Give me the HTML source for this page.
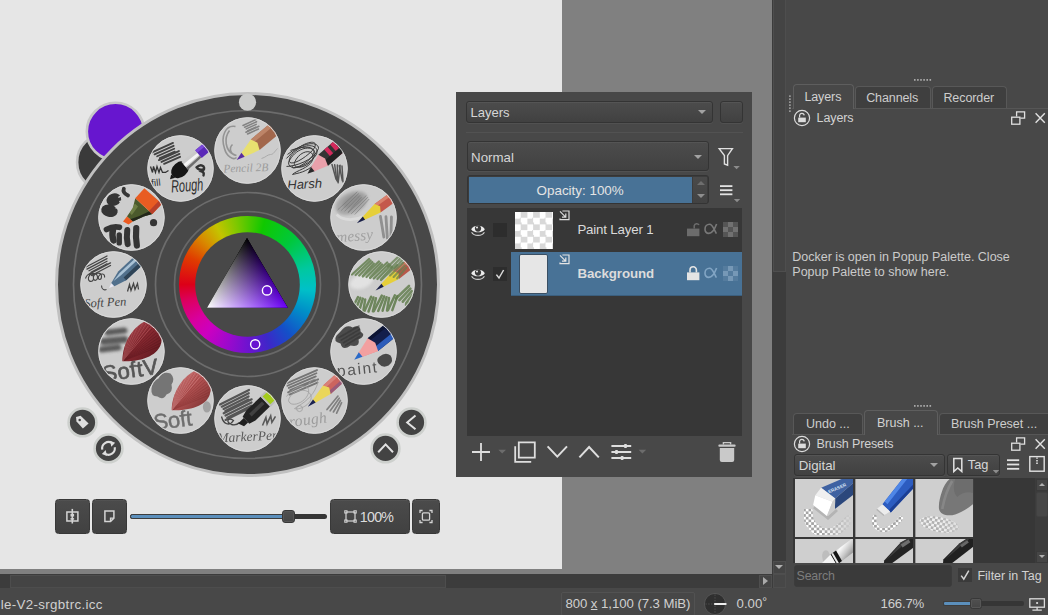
<!DOCTYPE html>
<html>
<head>
<meta charset="utf-8">
<title>Krita</title>
<style>
*{box-sizing:border-box;margin:0;padding:0}
html,body{width:1048px;height:615px;overflow:hidden;background:#484848;font-family:"Liberation Sans",sans-serif;font-size:13px;color:#d2d2d2}
.abs{position:absolute}
#canvas{left:0;top:0;width:562px;height:569px;background:#e6e6e6}
#grayarea{left:0;top:0;width:772px;height:574px;background:#808080}
#vscroll{left:772px;top:0;width:14px;height:588px;background:#3c3c3c}
#rightpanel{left:786px;top:0;width:264px;height:615px;background:#484848}
#hscroll{left:0;top:574px;width:772px;height:14px;background:#3c3c3c}
#status{left:0;top:588px;width:1048px;height:27px;background:#484848}
.txt{position:absolute;white-space:nowrap;line-height:1}
</style>
</head>
<body>
<div class="abs" id="grayarea"></div>
<div class="abs" id="canvas"></div>
<div class="abs" id="vscroll"></div>
<div class="abs" id="rightpanel"></div>
<div class="abs" id="hscroll"></div>
<div class="abs" id="status"></div>
<!--PALETTE-->
<div class="abs" style="left:0;top:0;width:562px;height:574px;overflow:hidden">
<svg class="abs" style="left:0;top:0" width="562" height="574" viewBox="0 0 562 574">
  <defs>
    <clipPath id="pc"><circle r="33.2"/></clipPath>
    <filter id="bl2" x="-30%" y="-30%" width="160%" height="160%"><feGaussianBlur stdDeviation="1.6"/></filter>
    <filter id="bl" x="-20%" y="-20%" width="140%" height="140%"><feGaussianBlur stdDeviation="0.55"/></filter>
    <linearGradient id="gs7" x1="0" y1="0" x2="1" y2="1"><stop offset="0" stop-color="#d48282"/><stop offset=".45" stop-color="#b45454"/><stop offset="1" stop-color="#742c2c"/></linearGradient>
    <linearGradient id="gs8" x1="0" y1="0" x2="1" y2="1"><stop offset="0" stop-color="#b8505a"/><stop offset=".45" stop-color="#8a2a32"/><stop offset="1" stop-color="#54141a"/></linearGradient>
    <linearGradient id="tR" gradientUnits="userSpaceOnUse" x1="247" y1="238" x2="201.18" y2="303.75"><stop offset="0" stop-color="#000"/><stop offset="1" stop-color="#ff0000"/></linearGradient>
    <linearGradient id="tG" gradientUnits="userSpaceOnUse" x1="247" y1="238" x2="186.78" y2="273.20"><stop offset="0" stop-color="#000"/><stop offset="1" stop-color="#00ff00"/></linearGradient>
    <linearGradient id="tB" gradientUnits="userSpaceOnUse" x1="247" y1="238" x2="245.79" y2="308.46"><stop offset="0" stop-color="#000"/><stop offset="1" stop-color="#0000ff"/></linearGradient>
    <g id="pencil">
      <polygon points="0,0 6,-2 6,2"/>
    </g>
  </defs>
  <!-- bg / fg colour circles -->
  <circle cx="105.8" cy="162.2" r="28.7" fill="#3a3a3a" stroke="#c6c6c6" stroke-width="2.6"/>
  <circle cx="115.5" cy="131.5" r="28.7" fill="#6716cf" stroke="#c8c8c8" stroke-width="2.6"/>
  <!-- main disc -->
  <circle cx="247.5" cy="284.5" r="191" fill="#484848" stroke="#c0c0c0" stroke-width="3"/>
  <circle cx="247.5" cy="284.5" r="174" fill="none" stroke="#6c6c6c" stroke-width="1.7"/>
  <circle cx="247.5" cy="284.5" r="92" fill="none" stroke="#6c6c6c" stroke-width="1.7"/>
  <circle cx="247.5" cy="284.5" r="73" fill="none" stroke="#686868" stroke-width="1.7"/>
  <circle cx="247.5" cy="102.2" r="8.6" fill="#cbcccb"/>
</svg>
<div class="abs" style="left:178.8px;top:215.8px;width:137.4px;height:137.4px;border-radius:50%;background:conic-gradient(from 270deg,#dc0018 0deg,#e03c00 25deg,#d88a00 45deg,#c4c400 62deg,#7cc800 80deg,#10c800 105deg,#00c83c 135deg,#00c8a0 165deg,#00c0c8 185deg,#0090c8 205deg,#1450c8 230deg,#3c28c8 250deg,#6a14d0 268deg,#a008cc 290deg,#cc00c0 310deg,#d800a0 325deg,#dc0060 345deg,#dc0018 360deg)"></div>
<svg class="abs" style="left:0;top:0" width="562" height="574" viewBox="0 0 562 574">
  <circle cx="247.5" cy="284.5" r="52.3" fill="#484848"/>
  <g style="isolation:isolate"><polygon points="247,238 207,307.8 287.8,307.8" fill="url(#tR)"/><polygon points="247,238 207,307.8 287.8,307.8" fill="url(#tG)" style="mix-blend-mode:screen"/><polygon points="247,238 207,307.8 287.8,307.8" fill="url(#tB)" style="mix-blend-mode:screen"/></g>
  <circle cx="267" cy="290.4" r="4.6" fill="#6814d0" stroke="#fff" stroke-width="1.4"/>
  <circle cx="255.2" cy="344.3" r="4.6" fill="#6814d0" stroke="#fff" stroke-width="1.4"/>
  <!--PRESETS-->
<g transform="translate(247.50,150.50)"><circle r="33.2" fill="#cdcdcd"/><g clip-path="url(#pc)"><path d="M-12 -24 C-22 -26 -27 -14 -23 -2 C-21 6 -14 10 -11 7 M-18 -20 C-24 -12 -22 0 -14 4 M-15 -6 c-4 4 -2 10 4 11" stroke="#8a8a8a" stroke-width="1.6" fill="none" opacity=".85"/><g stroke="#7a7a7a" stroke-width="1.5" stroke-linecap="round" opacity="0.9" fill="none"><path d="M-4.5 -25.0 L9.5 -31.5"/><path d="M-2.9 -23.3 L9.1 -28.8"/><path d="M-1.3 -21.6 L8.7 -26.1"/><path d="M0.3 -19.9 L8.3 -23.4"/><path d="M-1.6 -18.2 L11.4 -24.2"/><path d="M0.0 -16.5 L11.0 -21.5"/></g><path d="M14 8 c4 -1 6 -4 9 -4 s4 -3 7 -6" stroke="#aaa" stroke-width="1" fill="none"/><g transform="translate(-10.8,9.6) rotate(-39.7) scale(1.5,1.22)"><polygon points="16,-5.6 60,-5.6 60,5.6 16,5.6" fill="#a2674c"/><polygon points="16,-5.6 60,-5.6 60,-2.1999999999999997 16,-2.1999999999999997" fill="#bd8468"/><polygon points="5,-1.9 16,-5.6 18,0 16,5.6 5,1.9" fill="#e8e070"/><polygon points="0,0 5.5,-2.1 5.5,2.1" fill="#5a2ea0"/></g><text x="-24" y="22" font-family="Liberation Serif" font-style="italic" font-weight="normal" font-size="11.5" fill="#9c9c9c" opacity="1" letter-spacing="0" transform="rotate(-2 -24 22)">Pencil 2B</text></g><circle r="32.7" fill="none" stroke="#d9d9d9" stroke-width="1"/></g>
<g transform="translate(314.50,168.45)"><circle r="33.2" fill="#cdcdcd"/><g clip-path="url(#pc)"><g stroke="#3a3a3a" stroke-width="1" fill="none"><path d="M-28 -10 C-10 -30 8 -30 -2 -18 C-14 -6 -30 0 -24 -12 C-14 -26 6 -26 2 -14 C-6 -2 -26 4 -26 -6 C-18 -24 4 -24 0 -12 C-6 0 -22 2 -20 -6 C-14 -20 2 -20 -2 -8 C-6 0 -18 2 -22 6 C-12 4 -6 2 2 -6"/><path d="M-27 -14 C-12 -26 4 -28 4 -20 C0 -8 -20 -2 -28 -2 M-24 -18 C-8 -24 6 -22 -4 -10 C-12 -2 -24 2 -22 -2"/></g><g stroke="#4a4a4a" stroke-width="1.5" stroke-linecap="round" opacity="0.9" fill="none"><path d="M17.5 -4.0 L21.5 10.5"/><path d="M20.2 -3.7 L22.2 11.8"/><path d="M22.9 -3.4 L22.9 13.1"/><path d="M25.6 -3.1 L23.6 14.4"/><path d="M24.8 -2.8 L27.8 12.2"/><path d="M27.5 -2.5 L28.5 13.5"/></g><g transform="translate(-7.1,5.4) rotate(-41) scale(1.3,1.3)"><polygon points="16,-5.6 60,-5.6 60,5.6 16,5.6" fill="#343434"/><rect x="22" y="-5.6" width="3.4" height="11.2" fill="#d42a5c"/><rect x="28" y="-5.6" width="3.4" height="11.2" fill="#d42a5c"/><polygon points="16,1 60,1 60,5.6 16,5.6" fill="#222"/><polygon points="5,-1.9 16,-5.6 18,0 16,5.6 5,1.9" fill="#e9a0aa"/><polygon points="0,0 5.5,-2.1 5.5,2.1" fill="#2a2a2a"/></g><text x="-27" y="21" font-family="Liberation Sans" font-style="italic" font-weight="normal" font-size="13" fill="#333" opacity="1" letter-spacing="0" transform="rotate(-3 -27 21)">Harsh</text></g><circle r="32.7" fill="none" stroke="#d9d9d9" stroke-width="1"/></g>
<g transform="translate(363.55,217.50)"><circle r="33.2" fill="#cdcdcd"/><g clip-path="url(#pc)"><g filter="url(#bl2)"><ellipse cx="-12" cy="-14.5" rx="17" ry="10.5" fill="#8e8e8e" opacity=".6" transform="rotate(-25 -12 -14.5)"/><ellipse cx="-11" cy="-16" rx="11" ry="6" fill="#787878" opacity=".45" transform="rotate(-25 -11 -16)"/></g><g stroke="#6e6e6e" stroke-width="1.0" stroke-linecap="round" opacity="0.5" fill="none"><path d="M-25.5 -8.0 L-6.5 -25.5"/><path d="M-22.1 -7.2 L-5.1 -23.7"/><path d="M-18.7 -6.4 L-3.7 -21.9"/><path d="M-15.3 -5.6 L-2.3 -20.1"/><path d="M-15.4 -4.8 L2.6 -21.8"/><path d="M-12.0 -4.0 L4.0 -20.0"/><path d="M-8.6 -3.2 L5.4 -18.2"/></g><path d="M-27 -3 C-20 4 -8 3 0 -1" stroke="#e2e2e2" stroke-width="2.6" fill="none" opacity=".7" filter="url(#bl)"/><g filter="url(#bl)"><g stroke="#858585" stroke-width="2.8" stroke-linecap="round" opacity="0.85" fill="none"><path d="M16.9 -1.0 L20.3 19.5"/><path d="M22.4 -0.8 L23.8 20.7"/><path d="M27.9 -0.6 L27.3 21.9"/></g></g><g transform="translate(-6.7,5.8) rotate(-36) scale(1.6,0.92)"><polygon points="16,-5.6 60,-5.6 60,5.6 16,5.6" fill="#c4584c"/><polygon points="16,-5.6 60,-5.6 60,-2.1999999999999997 16,-2.1999999999999997" fill="#d9806c"/><polygon points="5,-1.9 16,-5.6 18,0 16,5.6 5,1.9" fill="#e6cf3a"/><polygon points="0,0 5.5,-2.1 5.5,2.1" fill="#1a2048"/></g><g filter="url(#bl)"><text x="-27" y="25" font-family="Liberation Serif" font-style="italic" font-weight="normal" font-size="15.5" fill="#a2a2a2" opacity="1" letter-spacing="0" transform="rotate(-5 -27 25)">messy</text></g></g><circle r="32.7" fill="none" stroke="#d9d9d9" stroke-width="1"/></g>
<g transform="translate(381.50,284.50)"><circle r="33.2" fill="#cdcdcd"/><g clip-path="url(#pc)"><ellipse cx="-20" cy="-3" rx="12" ry="7" fill="#e9e9e9" opacity=".75" transform="rotate(-20 -20 -3)" filter="url(#bl2)"/><g filter="url(#bl)"><g stroke="#647f50" stroke-width="2.3" stroke-linecap="round" opacity="0.85" fill="none"><path d="M-29.5 -10.0 L-12.5 -25.5"/><path d="M-25.9 -9.5 L-10.9 -24.0"/><path d="M-22.3 -9.0 L-9.3 -22.5"/><path d="M-18.7 -8.5 L-7.7 -21.0"/><path d="M-18.6 -8.0 L-2.6 -23.0"/><path d="M-15.0 -7.5 L-1.0 -21.5"/><path d="M-11.4 -7.0 L0.6 -20.0"/><path d="M-11.3 -6.5 L5.7 -22.0"/><path d="M-7.7 -6.0 L7.3 -20.5"/><path d="M-4.1 -5.5 L8.9 -19.0"/><path d="M-0.5 -5.0 L10.5 -17.5"/><path d="M-0.4 -4.5 L15.6 -19.5"/></g><g stroke="#647f50" stroke-width="2.3" stroke-linecap="round" opacity="0.75" fill="none"><path d="M6.5 -18.0 L17.5 -28.5"/><path d="M9.9 -16.8 L18.9 -26.3"/><path d="M13.3 -15.6 L20.3 -24.1"/><path d="M16.7 -14.4 L21.7 -21.9"/><path d="M16.6 -13.2 L26.6 -23.2"/></g><g stroke="#5f7b4a" stroke-width="2.5" stroke-linecap="round" opacity="0.85" fill="none"><path d="M-31.5 28.0 L-23.5 12.5"/><path d="M-27.1 27.8 L-21.1 13.3"/><path d="M-22.7 27.6 L-18.7 14.1"/><path d="M-18.3 27.4 L-16.3 14.9"/><path d="M-17.4 27.2 L-10.4 12.2"/><path d="M-13.0 27.0 L-8.0 13.0"/><path d="M-8.6 26.8 L-5.6 13.8"/><path d="M-7.7 26.6 L0.3 11.1"/><path d="M-3.3 26.4 L2.7 11.9"/><path d="M1.1 26.2 L5.1 12.7"/><path d="M5.5 26.0 L7.5 13.5"/><path d="M6.4 25.8 L13.4 10.8"/><path d="M10.8 25.6 L15.8 11.6"/></g><g stroke="#5f7b4a" stroke-width="2.6" stroke-linecap="round" opacity="0.8" fill="none"><path d="M14.5 14.0 L27.5 1.5"/><path d="M17.9 15.6 L28.9 4.1"/><path d="M21.3 17.2 L30.3 6.7"/><path d="M24.7 18.8 L31.7 9.3"/><path d="M24.6 20.4 L36.6 8.4"/></g></g><g transform="translate(-5.9,6) rotate(-37.5) scale(1.6,0.9)"><polygon points="16,-5.6 60,-5.6 60,5.6 16,5.6" fill="#b8584a"/><polygon points="16,-5.6 60,-5.6 60,-2.1999999999999997 16,-2.1999999999999997" fill="#cf7862"/><polygon points="5,-1.9 16,-5.6 18,0 16,5.6 5,1.9" fill="#e6cf3a"/><polygon points="0,0 5.5,-2.1 5.5,2.1" fill="#1a2048"/></g><g filter="url(#bl)"><g stroke="#647f50" stroke-width="2.2" stroke-linecap="round" opacity="0.7" fill="none"><path d="M8.5 -9.0 L21.5 -21.5"/><path d="M12.1 -7.6 L23.1 -19.1"/><path d="M15.7 -6.2 L24.7 -16.7"/></g></g></g><circle r="32.7" fill="none" stroke="#d9d9d9" stroke-width="1"/></g>
<g transform="translate(363.55,351.50)"><circle r="33.2" fill="#cdcdcd"/><g clip-path="url(#pc)"><g filter="url(#bl)"><path d="M-23 -20 q6 -8 12 -4 q8 -4 8 4 q6 4 -2 8 q2 8 -8 6 q-8 6 -10 -2 q-8 -2 -4 -8 z" fill="#3f3f3f" opacity=".92"/><g stroke="#2e2e2e" stroke-width="1.6" stroke-linecap="round" opacity="0.5" fill="none"><path d="M-24.5 -14.0 L-4.5 -25.5"/><path d="M-22.3 -11.4 L-4.3 -21.9"/><path d="M-20.1 -8.8 L-4.1 -18.3"/><path d="M-17.9 -6.2 L-3.9 -14.7"/></g><path d="M16 5 q6 -5 11 -1 q4 6 -2 10 q-6 3 -10 -2 q-3 -4 1 -7z" fill="#3c3c3c" opacity=".9"/></g><g transform="translate(-9.3,8.2) rotate(-39) scale(1.5,1.42)"><polygon points="16,-5.8 60,-5.8 60,5.8 16,5.8" fill="#131f4c"/><polygon points="16,2.2 60,2.2 60,5.8 16,5.8" fill="#2c5cba"/><polygon points="16,-5.8 60,-5.8 60,-3.4 16,-3.4" fill="#0c1433"/><polygon points="5,0.4 16,1.6 16,5.8 5,1.9" fill="#e08890"/><polygon points="5,-1.9 16,-5.8 18,0 16,5.8 5,1.9" fill="#f2a0a0"/><polygon points="0,0 5.5,-2.1 5.5,2.1" fill="#2a6ac8"/></g><g filter="url(#bl)"><text x="-26" y="25" font-family="Liberation Sans" font-style="normal" font-weight="normal" font-size="15.5" fill="#565656" opacity="1" letter-spacing="1.6" transform="rotate(-6 -26 25)">paint</text></g></g><circle r="32.7" fill="none" stroke="#d9d9d9" stroke-width="1"/></g>
<g transform="translate(314.50,400.55)"><circle r="33.2" fill="#cdcdcd"/><g clip-path="url(#pc)"><g filter="url(#bl)"><g stroke="#6c6c6c" stroke-width="1.9" stroke-linecap="round" opacity="0.9" fill="none"><path d="M-28.5 -17.0 L2.5 -30.5"/><path d="M-27.1 -14.8 L1.9 -27.3"/><path d="M-25.7 -12.6 L1.3 -24.1"/><path d="M-24.3 -10.4 L0.7 -20.9"/><path d="M-26.4 -8.2 L3.6 -21.2"/><path d="M-25.0 -6.0 L3.0 -18.0"/></g></g><g stroke="#a0a0a0" stroke-width=".8" fill="none"><path d="M-28 -4 C-20 -16 -4 -18 -6 -8 C-8 2 -24 8 -26 0 C-24 -10 -8 -14 -4 -6 C0 2 -14 10 -20 8 C-10 2 -2 -4 2 -14 C6 -22 -2 -24 -6 -16"/><circle cx="-15" cy="8" r="3"/></g><g filter="url(#bl)"><g stroke="#787878" stroke-width="1.7" stroke-linecap="round" opacity="0.9" fill="none"><path d="M12.5 9.0 L23.5 -4.5"/><path d="M15.7 10.2 L24.7 -2.3"/><path d="M18.9 11.4 L25.9 -0.1"/><path d="M22.1 12.6 L27.1 2.1"/></g></g><g transform="translate(-6.7,6.3) rotate(-42) scale(1.6,0.98)"><polygon points="16,-5.8 60,-5.8 60,5.8 16,5.8" fill="#cc645e"/><polygon points="16,-5.8 60,-5.8 60,-2.4 16,-2.4" fill="#d88078"/><polygon points="16,2.6 60,2.6 60,5.8 16,5.8" fill="#9a5a78"/><polygon points="5,-1.9 16,-5.8 18,0 16,5.8 5,1.9" fill="#ead65a"/><polygon points="0,0 5.5,-2.1 5.5,2.1" fill="#1a2250"/></g><g filter="url(#bl)"><text x="-25" y="26.5" font-family="Liberation Serif" font-style="italic" font-weight="normal" font-size="15.5" fill="#9c9c9c" opacity="1" letter-spacing="0.4" transform="rotate(-7 -25 26.5)">rough</text></g></g><circle r="32.7" fill="none" stroke="#d9d9d9" stroke-width="1"/></g>
<g transform="translate(247.50,418.50)"><circle r="33.2" fill="#cdcdcd"/><g clip-path="url(#pc)"><g stroke="#4c4c4c" stroke-width="2.2" stroke-linecap="round" opacity="0.92" fill="none"><path d="M-27.5 -14.0 L1.5 -28.5"/><path d="M-25.7 -11.8 L1.3 -25.3"/><path d="M-23.9 -9.6 L1.1 -22.1"/><path d="M-22.1 -7.4 L0.9 -18.9"/><path d="M-23.8 -5.2 L4.2 -19.2"/><path d="M-22.0 -3.0 L4.0 -16.0"/><path d="M-20.2 -0.8 L3.8 -12.8"/><path d="M-21.9 1.4 L7.1 -13.1"/></g><path d="M-26 -2 c2 8 8 10 12 4 c-6 -4 -8 2 -2 4 c4 1 6 0 8 -2" stroke="#444" stroke-width="1.3" fill="none"/><path d="M15 7 l3.4 -8 l1.2 6.4 l3.6 -8 l1.2 6.4 l3.6 -6" stroke="#5a5a5a" stroke-width="1.6" fill="none"/><g transform="translate(-6.4,6.4) rotate(-44) scale(1.12,1.2)"><polygon points="-1,-2.6 6,-2.6 6,2.6 1,2.6" fill="#1e1e1e"/><polygon points="6,-4 12,-5.6 30,-5.6 30,5.6 12,5.6 6,4" fill="#232323"/><polygon points="12,-2 28,-2 28,1 12,1" fill="#555" opacity=".6"/><rect x="30" y="-6.2" width="9" height="12.4" fill="#bcbcbc"/><rect x="31.5" y="-4.6" width="7" height="9.2" fill="#a4cc1c"/><rect x="39" y="-5.6" width="20" height="11.2" fill="#333"/></g><g filter="url(#bl)"><text x="-30" y="24" font-family="Liberation Serif" font-style="italic" font-weight="normal" font-size="13.5" fill="#5a5a5a" opacity="1" letter-spacing="0" transform="rotate(-3 -30 24)">MarkerPen</text></g></g><circle r="32.7" fill="none" stroke="#d9d9d9" stroke-width="1"/></g>
<g transform="translate(180.50,400.55)"><circle r="33.2" fill="#cdcdcd"/><g clip-path="url(#pc)"><path d="M-29 -12 q1 -8 7 -10 q4 -8 12 -5 q5 5 1 11 q2 8 -5 10 q-3 6 -9 2 q-7 0 -6 -8z" fill="#6c6c6c" opacity=".9" filter="url(#bl)"/><ellipse cx="26.4" cy="6.4" rx="4" ry="5.6" fill="#858585" opacity=".6" filter="url(#bl)"/><clipPath id="bs7"><path d="M-8.7 9.6 C-8.7 -2 -3 -20 14.1 -29.7 C26 -30 34 -19 29.8 -8.5 C28 5 10 10.5 -8.7 9.6Z"/></clipPath><path d="M-8.7 9.6 C-8.7 -2 -3 -20 14.1 -29.7 C26 -30 34 -19 29.8 -8.5 C28 5 10 10.5 -8.7 9.6Z" fill="url(#gs7)"/><g clip-path="url(#bs7)"><g stroke="#7a2626" stroke-width="0.6" opacity="0.5" fill="none"><path d="M-8.7 9.6 L-4.1 -34.2"/><path d="M-8.7 9.6 L-1.3 -33.8"/><path d="M-8.7 9.6 L1.4 -33.2"/><path d="M-8.7 9.6 L4.1 -32.5"/><path d="M-8.7 9.6 L6.8 -31.6"/><path d="M-8.7 9.6 L9.4 -30.5"/><path d="M-8.7 9.6 L11.9 -29.3"/><path d="M-8.7 9.6 L14.3 -27.9"/><path d="M-8.7 9.6 L16.6 -26.4"/><path d="M-8.7 9.6 L18.9 -24.7"/><path d="M-8.7 9.6 L21.0 -22.9"/><path d="M-8.7 9.6 L23.0 -20.9"/><path d="M-8.7 9.6 L24.9 -18.8"/><path d="M-8.7 9.6 L26.6 -16.6"/><path d="M-8.7 9.6 L28.2 -14.3"/><path d="M-8.7 9.6 L29.7 -11.9"/><path d="M-8.7 9.6 L31.0 -9.4"/><path d="M-8.7 9.6 L32.1 -6.9"/></g><g stroke="#f0b0b0" stroke-width="0.8" opacity="0.4" fill="none"><path d="M-8.7 9.6 L0.4 -33.4"/><path d="M-8.7 9.6 L3.4 -32.7"/><path d="M-8.7 9.6 L6.3 -31.7"/><path d="M-8.7 9.6 L9.2 -30.6"/><path d="M-8.7 9.6 L12.0 -29.2"/><path d="M-8.7 9.6 L14.6 -27.7"/><path d="M-8.7 9.6 L17.2 -26.0"/><path d="M-8.7 9.6 L19.6 -24.1"/></g></g><g filter="url(#bl)"><text stroke="#6e6e6e" stroke-width=".5" x="-26" y="29.5" font-family="Liberation Sans" font-style="normal" font-weight="normal" font-size="22" fill="#6e6e6e" opacity="1" letter-spacing="-0.2" transform="rotate(-7 -26 29.5)">Soft</text></g></g><circle r="32.7" fill="none" stroke="#d9d9d9" stroke-width="1"/></g>
<g transform="translate(131.45,351.50)"><circle r="33.2" fill="#cdcdcd"/><g clip-path="url(#pc)"><g filter="url(#bl2)" stroke="#4e4e4e" stroke-linecap="round" fill="none" opacity=".9"><path d="M-24 -19 L-7 -21" stroke-width="6"/><path d="M-28 -10 L-7 -12" stroke-width="7"/><path d="M-30 -2 L-13 -4" stroke-width="6"/></g><clipPath id="bs8"><path d="M-9 9.8 C-9 -2 -4 -20 12.3 -29.4 C25 -30 34 -20 30 -10 C28 4 10 10.5 -9 9.8Z"/></clipPath><path d="M-9 9.8 C-9 -2 -4 -20 12.3 -29.4 C25 -30 34 -20 30 -10 C28 4 10 10.5 -9 9.8Z" fill="url(#gs8)"/><g clip-path="url(#bs8)"><g stroke="#4e1218" stroke-width="0.6" opacity="0.55" fill="none"><path d="M-9 9.8 L-4.4 -34.0"/><path d="M-9 9.8 L-1.6 -33.6"/><path d="M-9 9.8 L1.1 -33.0"/><path d="M-9 9.8 L3.8 -32.3"/><path d="M-9 9.8 L6.5 -31.4"/><path d="M-9 9.8 L9.1 -30.3"/><path d="M-9 9.8 L11.6 -29.1"/><path d="M-9 9.8 L14.0 -27.7"/><path d="M-9 9.8 L16.3 -26.2"/><path d="M-9 9.8 L18.6 -24.5"/><path d="M-9 9.8 L20.7 -22.7"/><path d="M-9 9.8 L22.7 -20.7"/><path d="M-9 9.8 L24.6 -18.6"/><path d="M-9 9.8 L26.3 -16.4"/><path d="M-9 9.8 L27.9 -14.1"/><path d="M-9 9.8 L29.4 -11.7"/><path d="M-9 9.8 L30.7 -9.2"/><path d="M-9 9.8 L31.8 -6.7"/></g><g stroke="#e08888" stroke-width="0.8" opacity="0.4" fill="none"><path d="M-9 9.8 L0.1 -33.2"/><path d="M-9 9.8 L3.1 -32.5"/><path d="M-9 9.8 L6.0 -31.5"/><path d="M-9 9.8 L8.9 -30.4"/><path d="M-9 9.8 L11.7 -29.0"/><path d="M-9 9.8 L14.3 -27.5"/><path d="M-9 9.8 L16.9 -25.8"/><path d="M-9 9.8 L19.3 -23.9"/></g></g><g filter="url(#bl)"><text stroke="#565656" stroke-width=".7" x="-28" y="30" font-family="Liberation Sans" font-style="normal" font-weight="normal" font-size="22" fill="#565656" opacity="1" letter-spacing="0.5" transform="rotate(-8 -28 30)">SoftV</text></g></g><circle r="32.7" fill="none" stroke="#d9d9d9" stroke-width="1"/></g>
<g transform="translate(113.50,284.50)"><circle r="33.2" fill="#cdcdcd"/><g clip-path="url(#pc)"><g stroke="#3e3e3e" stroke-width="1.3" stroke-linecap="round" opacity="0.95" fill="none"><path d="M-28.5 -17.0 L-6.5 -28.5"/><path d="M-26.5 -15.4 L-6.5 -25.9"/><path d="M-24.5 -13.8 L-6.5 -23.3"/><path d="M-22.5 -12.2 L-6.5 -20.7"/><path d="M-24.0 -10.6 L-3.0 -21.6"/><path d="M-22.0 -9.0 L-3.0 -19.0"/></g><path d="M-28 -6 c2 -6 8 -6 8 0 c0 4 -6 4 -5 -1 c2 -6 9 -5 9 0 c0 4 -5 4 -4 -1 c2 -5 8 -4 8 0 c0 4 -4 4 -3 0 c2 -4 7 -3 6 1 M-12 1 c0 4 3 5 5 4" stroke="#444" stroke-width="1.1" fill="none"/><path d="M14 7 l2 -7 l1.5 6 l2.5 -7 l1.5 6 l2.5 -6 l1 6" stroke="#444" stroke-width="1.3" fill="none"/><g transform="translate(-4.4,3.6) rotate(-43) scale(1.28)"><polygon points="0,0 4,-1.6 4,1.6" fill="#e8e8f4"/><polygon points="4,-1.8 14,-4.6 34,-4.6 34,4.6 14,4.6 4,1.8" fill="#51708c"/><polygon points="6,-1.6 14,-3 34,-3 34,-1 14,-1" fill="#a9c2d6"/><polygon points="14,1.6 34,1.6 34,4.6 14,4.6" fill="#2e4356"/><rect x="34" y="-4.8" width="22" height="9.6" fill="#202020"/></g><text x="-29" y="23" font-family="Liberation Serif" font-style="italic" font-weight="normal" font-size="12.5" fill="#454545" opacity="1" letter-spacing="0" transform="rotate(-3 -29 23)">Soft Pen</text></g><circle r="32.7" fill="none" stroke="#d9d9d9" stroke-width="1"/></g>
<g transform="translate(131.45,217.50)"><circle r="33.2" fill="#cdcdcd"/><g clip-path="url(#pc)"><g fill="none" stroke="#353535" stroke-linecap="round"><path d="M-7.6 -28.8 q-1.6 3.8 4.2 6.8" stroke-width="3.8"/><ellipse cx="-17.6" cy="-17.8" rx="5" ry="3.6" transform="rotate(-22 -17.6 -17.8)" stroke-width="5" fill="#353535"/><ellipse cx="-22" cy="-6.8" rx="5.6" ry="3.4" transform="rotate(12 -22 -6.8)" stroke-width="5.4" fill="#353535"/><path d="M-12.6 -20.4 l3 -1.4 M-11.6 -16 l3 -0.6 M-15.4 -9.6 l2.6 -1.6" stroke="#cdcdcd" stroke-width="1.4"/><path d="M-25 12 q7 -3.8 13 -2.2" stroke-width="5.6"/><path d="M-18.4 11.4 q-1.4 6 0.4 11.6" stroke-width="6.4"/><path d="M-12.2 17.4 v8" stroke-width="5.4"/><path d="M-4.2 12.6 q-1 8 0.4 14" stroke-width="6"/><path d="M4.8 10.6 q-0.8 9 0.6 17.4" stroke-width="6.2"/></g><circle cx="22.1" cy="5.2" r="3.6" fill="#353535"/><polygon points="3.8,-19.2 20.9,-3.4 12.3,-0.9 1.4,4 -4.5,-0.9 1.4,-9.5" fill="#4b5a2c"/><polygon points="20.9,-3.4 12.3,-0.9 1.4,4 -1.4,1.8 8,-1.6 17.8,-6.2" fill="#23281a"/><polygon points="3.4,-14 6.6,-11 0.4,-2.6 -1.6,-4.4" fill="#7c8c4e" opacity=".7"/><polygon points="-4.5,-0.9 1.4,4 -2.9,7 -8.4,4" fill="#ec5a20"/><polygon points="12.9,-29.2 30.6,-13.7 20.9,-3.4 3.8,-19.2" fill="#e85c22"/><polygon points="30.6,-13.7 20.9,-3.4 17.6,-6.4 27.2,-16.6" fill="#b8402a"/></g><circle r="32.7" fill="none" stroke="#d9d9d9" stroke-width="1"/></g>
<g transform="translate(180.50,168.45)"><circle r="33.2" fill="#cdcdcd"/><g clip-path="url(#pc)"><g stroke="#3c3c3c" stroke-width="1.9" stroke-linecap="round" opacity="0.95" fill="none"><path d="M-28.5 -16.0 L-7.5 -25.5"/><path d="M-25.9 -14.1 L-6.9 -22.6"/><path d="M-23.3 -12.2 L-6.3 -19.7"/><path d="M-20.7 -10.3 L-5.7 -16.8"/><path d="M-21.6 -8.4 L-1.6 -17.4"/><path d="M-19.0 -6.5 L-1.0 -14.5"/><path d="M-16.4 -4.6 L-0.4 -11.6"/></g><path d="M-30 -2 l2 6 l1 -6 l2 6 l1.5 -6 l2 6 l1.5 -5 l2 5 l3 0 l3 -2" stroke="#333" stroke-width="1.3" fill="none"/><path d="M16 -1 q4 -4 7 -1 q2 3 -2 5 q3 1 2 4 M17 0 q3 2 5 1" stroke="#333" stroke-width="2.4" fill="none" stroke-linecap="round"/><g transform="translate(-5,5) rotate(-40)"><ellipse cx="6" cy="0" rx="10" ry="7.4" fill="#161616"/><path d="M-4 -2 l-4 3 l5 2z" fill="#161616"/><polygon points="12,-5.2 30,-4.4 30,4.4 12,5.2" fill="#c9c9c9"/><polygon points="12,-2 30,-1.6 30,1 12,1.4" fill="#fff" opacity=".8"/><polygon points="12,2.6 30,2.2 30,4.4 12,5.2" fill="#6e6e6e"/><rect x="30" y="-5" width="24" height="10" fill="#5a28b8"/><rect x="30" y="-5" width="24" height="3.2" fill="#7a48d8"/></g><text x="-29" y="18" font-family="Liberation Sans" font-style="normal" font-weight="normal" font-size="10" fill="#333" opacity="1" letter-spacing="0" transform="rotate(-6 -29 18)">fill</text><g transform="translate(-9,24) rotate(-4) scale(.78,1.25)"><text x="0" y="0" font-family="Liberation Sans" font-style="italic" font-weight="normal" font-size="14" fill="#2f2f2f" opacity="1" letter-spacing="0" transform="rotate(0 0 0)">Rough</text></g></g><circle r="32.7" fill="none" stroke="#d9d9d9" stroke-width="1"/></g>
<!--/PRESETS-->
    <g id="pbtns">
    <g transform="translate(82.5,422.4)"><circle r="13.9" fill="#434343" stroke="#cdd0cd" stroke-width="2.6"/><path d="M-6.5 -5.3 L-1.9 -6.6 L6.1 1 L0.4 6.1 L-6 -0.8 Z" fill="#dedede"/><circle cx="-2.8" cy="-2.4" r="1.25" fill="#434343"/></g>
    <g transform="translate(108.5,448.4)"><circle r="13.9" fill="#434343" stroke="#cdd0cd" stroke-width="2.6"/>
      <path d="M-6.2 1.2 A6.3 6.3 0 0 1 3.6 -5.2" stroke="#dedede" stroke-width="2.1" fill="none"/><path d="M1.6 -7.6 L6.6 -5.6 L2.8 -1.6 Z" fill="#dedede"/>
      <path d="M6.2 -1.2 A6.3 6.3 0 0 1 -3.6 5.2" stroke="#dedede" stroke-width="2.1" fill="none"/><path d="M-1.6 7.6 L-6.6 5.6 L-2.8 1.6 Z" fill="#dedede"/></g>
    <g transform="translate(411.5,422.4)"><circle r="13.9" fill="#434343" stroke="#cdd0cd" stroke-width="2.6"/><path d="M4 -6.9 L-4.3 0 L4 6.9" stroke="#e2e2e2" stroke-width="2" fill="none"/></g>
    <g transform="translate(385.5,448.4)"><circle r="13.9" fill="#434343" stroke="#cdd0cd" stroke-width="2.6"/><path d="M-7.3 3.8 L0.1 -4 L7.5 3.8" stroke="#e2e2e2" stroke-width="2" fill="none"/></g>
  </g>

</svg>
</div>

<!--TOOLBAR-->
<style>
.tb{position:absolute;top:499px;height:35px;border-radius:3.5px;border:1px solid #383838;background:linear-gradient(#4b4b4b,#414141);box-shadow:inset 0 1px 0 rgba(255,255,255,.04)}
</style>
<div class="tb" style="left:55px;width:35px"><svg width="33" height="33" viewBox="-16.5 -16.5 33 33"><path d="M-5.6 -4.4 H5.4 V4.6 H-5.6 Z" fill="none" stroke="#d4d4d4" stroke-width="1.5"/><path d="M-0.2 -7.6 V7" stroke="#d4d4d4" stroke-width="1.6"/><rect x="-2" y="-2.6" width="3.6" height="2.6" fill="#d4d4d4"/><rect x="-2" y="1.6" width="3.6" height="1.6" fill="#d4d4d4"/></svg></div>
<div class="tb" style="left:92px;width:35px"><svg width="33" height="33" viewBox="-16.5 -16.5 33 33"><path d="M-4.6 -5.6 H4.4 V1.6 L1 5 H-4.6 Z" fill="none" stroke="#d4d4d4" stroke-width="1.5"/><path d="M4.4 1.6 H1 V5" fill="none" stroke="#d4d4d4" stroke-width="1.3"/></svg></div>
<div class="abs" style="left:130px;top:514px;width:197px;height:5px;border-radius:2.5px;background:#363636"></div>
<div class="abs" style="left:130px;top:514px;width:156px;height:5px;border-radius:2.5px;background:#5b8fbc;border:1px solid #3d3d3d"></div>
<div class="abs" style="left:282px;top:510px;width:13px;height:13px;border-radius:3px;background:linear-gradient(#505050,#464646);border:1px solid #383838;box-shadow:inset 0 0 0 1px #565656"></div>
<div class="tb" style="left:330px;width:80px"><svg class="abs" style="left:13px;top:10.2px" width="13" height="13" viewBox="0 0 13 13"><rect x="2" y="2" width="9" height="9" fill="none" stroke="#d4d4d4" stroke-width="1.2"/><g fill="none" stroke="#d4d4d4" stroke-width=".9"><rect x="0.7" y="0.7" width="2.4" height="2.4"/><rect x="9.9" y="0.7" width="2.4" height="2.4"/><rect x="0.7" y="9.9" width="2.4" height="2.4"/><rect x="9.9" y="9.9" width="2.4" height="2.4"/></g></svg><span class="txt" style="left:28.8px;top:9.5px;font-size:14.2px;letter-spacing:-.7px;color:#dcdcdc">100%</span></div>
<div class="tb" style="left:412px;width:28px"><svg class="abs" style="left:6px;top:9px" width="14" height="15" viewBox="-7 -7.5 14 15"><rect x="-3.6" y="-3.6" width="7.2" height="7.2" rx="1.2" fill="none" stroke="#d4d4d4" stroke-width="1.3"/><path d="M-6 -3.4 V-6 H-3.4 M3.4 -6 H6 V-3.4 M6 3.4 V6 H3.4 M-3.4 6 H-6 V3.4" fill="none" stroke="#d4d4d4" stroke-width="1.3"/></svg></div>

<!--DOCKER-->
<style>
.cb{position:absolute;border:1px solid #343434;border-radius:3px;background:linear-gradient(#4c4c4c,#414141);box-shadow:inset 0 1px 0 rgba(255,255,255,.05),0 1px 0 rgba(255,255,255,.05)}
.arr{position:absolute;width:0;height:0;border-left:4px solid transparent;border-right:4px solid transparent;border-top:4.5px solid #a2a2a2}
.sarr{position:absolute;width:0;height:0;border-left:3.2px solid transparent;border-right:3.2px solid transparent;border-top:3.4px solid #8a8a8a}
</style>
<div class="abs" id="docker" style="left:456px;top:92px;width:296px;height:384.5px;background:#484848">
  <!-- coordinates inside are relative to (456,92) -->
  <div class="cb" style="left:9.5px;top:8.8px;width:247px;height:22.7px"><span class="txt" style="left:4px;top:4.2px;font-size:13px;color:#d6d6d6">Layers</span><div class="arr" style="left:231px;top:8.5px"></div></div>
  <div class="cb" style="left:263.5px;top:8.8px;width:23.5px;height:22.7px"></div>
  <div class="abs" style="left:10px;top:40px;width:277px;height:1px;background:#525252"></div>
  <div class="cb" style="left:10.5px;top:48.8px;width:242px;height:30.7px"><span class="txt" style="left:3.6px;top:8.8px;font-size:13.3px;color:#d6d6d6">Normal</span><div class="arr" style="left:226px;top:13px"></div></div>
  <!-- filter icon -->
  <svg class="abs" style="left:260px;top:54px" width="28" height="26" viewBox="0 0 28 26"><path d="M3.2 2.6 H16.4 L11.6 9.6 V19.2 L8.4 18 V9.6 Z" fill="none" stroke="#e0e0e0" stroke-width="1.4" stroke-linejoin="miter"/><path d="M17.4 20 h6.4 l-3.2 3.2z" fill="#8c8c8c"/></svg>
  <!-- opacity spin -->
  <div class="abs" style="left:10.5px;top:82.5px;width:242px;height:29.8px;border:1px solid #343434;border-radius:3px;background:#3c3c3c"></div>
  <div class="abs" style="left:12.8px;top:84.5px;width:223.6px;height:26.2px;background:#487296"></div>
  <span class="txt" style="left:80.6px;top:91.6px;font-size:13.4px;color:#e4e4e4">Opacity: 100%</span>
  <div class="abs" style="left:237.4px;top:84.5px;width:14px;height:26.2px;background:linear-gradient(#4a4a4a,#424242)"></div>
  <div class="abs" style="left:240.8px;top:89.4px;width:0;height:0;border-left:4px solid transparent;border-right:4px solid transparent;border-bottom:4.2px solid #6e6e6e"></div>
  <div class="abs" style="left:240.8px;top:101.8px;width:0;height:0;border-left:4px solid transparent;border-right:4px solid transparent;border-top:4.2px solid #8e8e8e"></div>
  <!-- hamburger -->
  <svg class="abs" style="left:262px;top:90px" width="26" height="24" viewBox="0 0 26 24"><g fill="#e2e2e2"><rect x="2" y="3.2" width="12.4" height="1.8"/><rect x="2" y="7.3" width="12.4" height="1.8"/><rect x="2" y="11.4" width="12.4" height="1.8"/></g><path d="M15.8 17 h6.4 l-3.2 3.2z" fill="#8c8c8c"/></svg>
  <!-- list -->
  <div class="abs" style="left:10.5px;top:115.5px;width:275px;height:228.3px;background:#373737"></div>
  <div class="abs" style="left:55px;top:160.4px;width:230.5px;height:43.6px;background:#487296"></div>
  <div class="abs" style="left:55px;top:203px;width:230.5px;height:1px;background:#3b5f7e"></div>
  <!-- eyes -->
  <svg class="abs" style="left:14px;top:130px" width="16" height="16" viewBox="0 0 16 16"><path d="M1.2 7.2 C3.4 2.6 12.6 2.6 14.8 7.2 C12.6 11.4 3.4 11.4 1.2 7.2Z" fill="#ececec"/><circle cx="8" cy="6.6" r="3.1" fill="#3a3a3a"/><circle cx="7" cy="5.6" r="1" fill="#ececec"/><path d="M1.6 10.2 C4 14.4 12 14.4 14.4 10.2" stroke="#cfcfcf" stroke-width="1.2" fill="none"/></svg>
  <svg class="abs" style="left:14px;top:174px" width="16" height="16" viewBox="0 0 16 16"><path d="M1.2 7.2 C3.4 2.6 12.6 2.6 14.8 7.2 C12.6 11.4 3.4 11.4 1.2 7.2Z" fill="#ececec"/><circle cx="8" cy="6.6" r="3.1" fill="#3a3a3a"/><circle cx="7" cy="5.6" r="1" fill="#ececec"/><path d="M1.6 10.2 C4 14.4 12 14.4 14.4 10.2" stroke="#cfcfcf" stroke-width="1.2" fill="none"/></svg>
  <div class="abs" style="left:37px;top:131px;width:14px;height:14px;background:#2d2d2d"></div>
  <div class="abs" style="left:37px;top:175px;width:14px;height:14px;background:#2d2d2d"></div>
  <svg class="abs" style="left:37px;top:175px" width="14" height="14" viewBox="0 0 14 14"><path d="M3.4 7.6 L6 11 L10.6 3" stroke="#dadada" stroke-width="1.5" fill="none"/></svg>
  <!-- thumbs -->
  <div class="abs" style="left:59px;top:120px;width:37.5px;height:37px;background:conic-gradient(#d8d8d8 25%,#fff 0 50%,#d8d8d8 0 75%,#fff 0) 0 0/12.4px 12.4px"></div>
  <div class="abs" style="left:62.5px;top:162px;width:29.5px;height:39.5px;background:#e6e6e6;border:1px solid #3a4f63;border-radius:2px"></div>
  <!-- layer type icons -->
  <svg class="abs" style="left:103px;top:118px" width="11" height="11" viewBox="0 0 11 11"><path d="M3.4 1 H10 V9.6 H1 V8.4" fill="none" stroke="#dcdcdc" stroke-width="1.2"/><path d="M1 1.4 L6.4 6.8 M6.8 3.4 V7.2 H3" fill="none" stroke="#dcdcdc" stroke-width="1.2"/></svg>
  <svg class="abs" style="left:103px;top:162px" width="11" height="11" viewBox="0 0 11 11"><path d="M3.4 1 H10 V9.6 H1 V8.4" fill="none" stroke="#e4e4e4" stroke-width="1.2"/><path d="M1 1.4 L6.4 6.8 M6.8 3.4 V7.2 H3" fill="none" stroke="#e4e4e4" stroke-width="1.2"/></svg>
  <span class="txt" style="left:121.4px;top:131.4px;font-size:13.3px;letter-spacing:-.18px;color:#dadada">Paint Layer 1</span>
  <span class="txt" style="left:121.4px;top:175.2px;font-size:13.3px;font-weight:bold;letter-spacing:-.1px;color:#dcdcdc">Background</span>
  <!-- locks -->
  <svg class="abs" style="left:230px;top:129px" width="15" height="16" viewBox="0 0 15 16"><rect x="1" y="7.6" width="12.4" height="7.6" fill="#6c6c6c"/><path d="M8.2 7.6 V4.6 A2.6 2.6 0 0 1 13 4 " fill="none" stroke="#6c6c6c" stroke-width="1.5"/></svg>
  <svg class="abs" style="left:230px;top:173px" width="15" height="16" viewBox="0 0 15 16"><rect x="1" y="7.4" width="12.4" height="7.8" fill="#e4e4e4"/><path d="M4 7.6 V5 A3.2 3.2 0 0 1 10.4 5 V7.6" fill="none" stroke="#e4e4e4" stroke-width="1.6"/></svg>
  <svg class="abs" style="left:248.4px;top:131.4px" width="14" height="12" viewBox="0 0 14 12"><path d="M12.6 1 C10.6 6.4 8 10.4 4.8 10.4 C2.2 10.4 1 8.4 1 6.2 C1 3.2 3 1.2 5.6 1.2 C8.8 1.2 9.6 6 12.4 10.6" fill="none" stroke="#787878" stroke-width="1.6"/></svg>
  <svg class="abs" style="left:248.4px;top:175.4px" width="14" height="12" viewBox="0 0 14 12"><path d="M12.6 1 C10.6 6.4 8 10.4 4.8 10.4 C2.2 10.4 1 8.4 1 6.2 C1 3.2 3 1.2 5.6 1.2 C8.8 1.2 9.6 6 12.4 10.6" fill="none" stroke="#82a5c4" stroke-width="1.6"/></svg>
  <svg class="abs" style="left:267px;top:130px" width="15" height="15" viewBox="0 0 15 15"><rect width="15" height="15" fill="#555"/><g fill="#717171"><rect x="5" y="0" width="5" height="5"/><rect x="0" y="5" width="5" height="5"/><rect x="10" y="5" width="5" height="5"/><rect x="5" y="10" width="5" height="5"/></g></svg>
  <svg class="abs" style="left:267px;top:174px" width="15" height="15" viewBox="0 0 15 15"><rect width="15" height="15" fill="#557c9e"/><g fill="#7698b6"><rect x="5" y="0" width="5" height="5"/><rect x="0" y="5" width="5" height="5"/><rect x="10" y="5" width="5" height="5"/><rect x="5" y="10" width="5" height="5"/></g></svg>
  <!-- bottom toolbar -->
  <svg class="abs" style="left:0;top:345px" width="296" height="39" viewBox="0 0 296 39">
    <g stroke="#dedede" stroke-width="1.8" fill="none">
      <path d="M16 15 H34 M25 6 V24"/>
      <path d="M62.8 5.4 H78.8 V20.6 H62.8 Z M59.2 9.2 V24.8 H75.2"/>
      <path d="M91.6 9.4 L101.3 19.6 L111 9.4" stroke-width="2"/>
      <path d="M123.4 20.4 L133.1 10 L142.8 20.4" stroke-width="2"/>
      <path d="M155.4 9 H175.2 M155.4 15 H175.2 M155.4 21 H175.2"/>
    </g>
    <g fill="#dedede"><rect x="168" y="7" width="3" height="4" rx="1"/><rect x="159" y="13" width="3" height="4" rx="1"/><rect x="164.6" y="19" width="3" height="4" rx="1"/></g>
    <path d="M42.4 12.8 h7.6 l-3.8 3.8z M182.6 12.8 h7.6 l-3.8 3.8z" fill="#6c6c6c"/>
    <g fill="#c9c9c9"><rect x="262.4" y="7.4" width="17.2" height="2.4" rx=".8"/><path d="M267.4 7.4 V5.6 H274.6 V7.4" fill="none" stroke="#c9c9c9" stroke-width="1.4"/><path d="M263.8 11 H278.2 V23 A2 2 0 0 1 276.2 25 H265.8 A2 2 0 0 1 263.8 23 Z"/></g>
  </svg>
</div>

<!--RIGHT-->
<style>
.tab{position:absolute;border:1px solid #585858;border-bottom:none;border-radius:4px 4px 0 0;background:#3f3f3f}
.tab.sel{background:#484848;border-color:#5e5e5e}
.rt{font-size:12.5px;color:#cdcdcd}
</style>
<!-- top docker (Layers) -->
<svg class="abs" style="left:913px;top:78px" width="20" height="4" viewBox="0 0 20 4"><g fill="#a8a8a8"><rect x="1" y="1" width="1.6" height="1.8"/><rect x="4.1" y="1" width="1.6" height="1.8"/><rect x="7.2" y="1" width="1.6" height="1.8"/><rect x="10.3" y="1" width="1.6" height="1.8"/><rect x="13.4" y="1" width="1.6" height="1.8"/><rect x="16.5" y="1" width="1.6" height="1.8"/></g></svg>
<svg class="abs" style="left:788px;top:94px" width="4" height="20" viewBox="0 0 4 20"><g fill="#a0a0a0"><rect x="1" y="1.4" width="1.8" height="1.5"/><rect x="1" y="4.4" width="1.8" height="1.5"/><rect x="1" y="7.4" width="1.8" height="1.5"/><rect x="1" y="10.4" width="1.8" height="1.5"/><rect x="1" y="13.4" width="1.8" height="1.5"/><rect x="1" y="16.4" width="1.8" height="1.5"/></g></svg>
<div class="abs" style="left:792px;top:107.5px;width:256px;height:1px;background:#565656"></div>
<div class="tab" style="left:855px;top:86px;width:76px;height:22px"></div>
<div class="tab" style="left:932px;top:86px;width:74.5px;height:22px"></div>
<div class="tab sel" style="left:792.5px;top:83.5px;width:61.5px;height:25.5px"></div>
<span class="txt rt" style="left:804.4px;top:90.6px;letter-spacing:-.1px;color:#d2d2d2">Layers</span>
<span class="txt rt" style="left:866.2px;top:92px;letter-spacing:-.1px">Channels</span>
<span class="txt rt" style="left:943.4px;top:92px;letter-spacing:-.08px">Recorder</span>
<svg class="abs" style="left:793px;top:109px" width="18" height="18" viewBox="-9 -9 18 18"><circle r="7.6" fill="none" stroke="#dcdcdc" stroke-width="1.2"/><rect x="-3.8" y="-0.4" width="7.6" height="4.6" fill="#dcdcdc"/><path d="M-2.4 -0.4 V-2.2 A2.3 2.3 0 0 1 2.2 -2.6" fill="none" stroke="#dcdcdc" stroke-width="1.2"/></svg>
<span class="txt rt" style="left:816.6px;top:112px;letter-spacing:-.1px;color:#d2d2d2">Layers</span>
<svg class="abs" style="left:1010px;top:110px" width="38" height="16" viewBox="0 0 38 16"><g fill="none" stroke="#e0e0e0" stroke-width="1.3"><path d="M6.6 6.6 V1.8 H14.6 V8.2 H10.4"/><rect x="1.7" y="7.2" width="8.2" height="7"/><path d="M25.6 3.2 L34.8 12.8 M34.8 3.2 L25.6 12.8" stroke-width="1.4"/></g></svg>
<div class="txt rt" style="left:792.3px;top:250.4px;line-height:14.6px;white-space:normal;width:250px;color:#cbcbcb">Docker is open in Popup Palette. Close<br>Popup Palette to show here.</div>

<!-- bottom docker (Brush presets) -->
<svg class="abs" style="left:913.4px;top:404.2px" width="20" height="4" viewBox="0 0 20 4"><g fill="#a8a8a8"><rect x="1" y="1" width="1.6" height="1.8"/><rect x="4.1" y="1" width="1.6" height="1.8"/><rect x="7.2" y="1" width="1.6" height="1.8"/><rect x="10.3" y="1" width="1.6" height="1.8"/><rect x="13.4" y="1" width="1.6" height="1.8"/><rect x="16.5" y="1" width="1.6" height="1.8"/></g></svg>
<div class="abs" style="left:792px;top:433.5px;width:256px;height:1px;background:#565656"></div>
<div class="tab" style="left:792.5px;top:412.5px;width:70.5px;height:21.5px"></div>
<div class="tab" style="left:938.5px;top:412.5px;width:115px;height:21.5px"></div>
<div class="tab sel" style="left:864px;top:410px;width:73.5px;height:25px"></div>
<span class="txt rt" style="left:806px;top:418.2px">Undo ...</span>
<span class="txt rt" style="left:877px;top:417.4px;color:#d2d2d2">Brush ...</span>
<span class="txt rt" style="left:951px;top:418.2px">Brush Preset ...</span>
<svg class="abs" style="left:793px;top:435px" width="18" height="18" viewBox="-9 -9 18 18"><circle r="7.6" fill="none" stroke="#dcdcdc" stroke-width="1.2"/><rect x="-3.8" y="-0.4" width="7.6" height="4.6" fill="#dcdcdc"/><path d="M-2.4 -0.4 V-2.2 A2.3 2.3 0 0 1 2.2 -2.6" fill="none" stroke="#dcdcdc" stroke-width="1.2"/></svg>
<span class="txt rt" style="left:816.6px;top:438px;letter-spacing:-.13px;color:#d2d2d2">Brush Presets</span>
<svg class="abs" style="left:1010px;top:436.4px" width="38" height="16" viewBox="0 0 38 16"><g fill="none" stroke="#e0e0e0" stroke-width="1.3"><path d="M6.6 6.6 V1.8 H14.6 V8.2 H10.4"/><rect x="1.7" y="7.2" width="8.2" height="7"/><path d="M25.6 3.2 L34.8 12.8 M34.8 3.2 L25.6 12.8" stroke-width="1.4"/></g></svg>
<div class="cb" style="left:794px;top:454px;width:151px;height:21.5px"><span class="txt" style="left:3.8px;top:3.6px;font-size:13.3px;letter-spacing:-.05px;color:#d6d6d6">Digital</span><div class="arr" style="left:135px;top:8.2px"></div></div>
<div class="cb" style="left:947px;top:454px;width:53px;height:21.5px"><svg class="abs" style="left:4px;top:2px" width="12" height="17" viewBox="0 0 12 17"><path d="M1.8 1.6 H9.8 V14.6 L5.8 11 L1.8 14.6 Z" fill="none" stroke="#e2e2e2" stroke-width="1.5"/></svg><span class="txt" style="left:19.8px;top:4px;font-size:12.8px;color:#d6d6d6">Tag</span><svg class="abs" style="left:44px;top:13.5px" width="8" height="6" viewBox="0 0 8 6"><path d="M.8 1 h6.4 l-3.2 3.4z" fill="#8c8c8c"/></svg></div>
<svg class="abs" style="left:1005px;top:455px" width="43" height="19" viewBox="0 0 43 19"><g fill="#e2e2e2"><rect x="2" y="4.3" width="12.2" height="1.8"/><rect x="2" y="8.6" width="12.2" height="1.8"/><rect x="2" y="12.9" width="12.2" height="1.8"/></g><rect x="24.8" y="1.6" width="14.4" height="14.6" fill="none" stroke="#e2e2e2" stroke-width="1.4"/><path d="M32 2.4 v1.4 M32 5 v1.4 M32 7.6 v1.4" stroke="#e2e2e2" stroke-width="1.6"/></svg>
<!-- presets grid -->
<div class="abs" style="left:793px;top:478px;width:242px;height:85px;background:#373737"></div>
<div class="abs" style="left:1035px;top:478px;width:13px;height:85px;background:#3c3c3c"></div>
<div class="abs" style="left:1036px;top:479px;width:12px;height:11.5px;background:#464646;border:1px solid #3a3a3a"></div>
<div class="sarr" style="left:1038.6px;top:482.6px;transform:rotate(180deg);border-top-color:#b0b0b0"></div>
<div class="abs" style="left:1035.5px;top:492px;width:12.5px;height:25px;background:#474747;border:1px solid #414141;border-radius:2px"></div>
<div class="abs" style="left:1036px;top:550.5px;width:12px;height:12px;background:#464646;border:1px solid #3a3a3a"></div>
<div class="sarr" style="left:1038.6px;top:555px;border-top-color:#b0b0b0"></div>
<svg class="abs" style="left:795px;top:479px" width="180" height="84" viewBox="0 0 180 84">
  <defs>
    <pattern id="chk" width="5.4" height="5.4" patternUnits="userSpaceOnUse"><rect width="5.4" height="5.4" fill="#fff"/><rect width="2.7" height="2.7" fill="#a4a4a4"/><rect x="2.7" y="2.7" width="2.7" height="2.7" fill="#a4a4a4"/></pattern>
    <linearGradient id="fadeR" x1="0" y1="0" x2="1" y2="0"><stop offset="0" stop-color="#fff"/><stop offset=".45" stop-color="#fff"/><stop offset="1" stop-color="#000"/></linearGradient>
    <mask id="m1"><rect width="58" height="58" fill="url(#fadeR)"/></mask>
    <linearGradient id="fadeR3" x1="0" y1="0" x2="1" y2="0"><stop offset="0" stop-color="#888"/><stop offset=".35" stop-color="#bbb"/><stop offset="1" stop-color="#111"/></linearGradient>
    <mask id="m3"><rect width="58" height="58" fill="url(#fadeR3)"/></mask>
    <linearGradient id="silver" x1="0" y1="0" x2="1" y2="1"><stop offset="0" stop-color="#8a8a8a"/><stop offset=".35" stop-color="#fafafa"/><stop offset=".6" stop-color="#c8c8c8"/><stop offset="1" stop-color="#6a6a6a"/></linearGradient>
    <clipPath id="c58"><rect width="58" height="58"/></clipPath>
    <clipPath id="c24"><rect width="58" height="24.2"/></clipPath>
  </defs>
  <!-- cell 1 eraser -->
  <g clip-path="url(#c58)"><rect width="58" height="58" fill="#cfcfcf"/>
    <g mask="url(#m1)"><path d="M13 32.5 C12 44 20 53 31 54 C40 54 48 48 54 41" fill="none" stroke="url(#chk)" stroke-width="9.5" stroke-linecap="round"/></g>
    <path d="M19 28 L33 39 L42 31" fill="none" stroke="#9a9a9a" stroke-width="3" opacity=".5"/>
    <polygon points="26.1,8.7 46.6,0 58,0 58,4.2 40.2,19.6" fill="#3f62a2"/>
    <polygon points="40.2,19.6 58,4.2 58,16 39.9,30.1" fill="#2b477c"/>
    <polygon points="26.1,8.7 40.2,19.6 37.5,22.8 20.3,16.3" fill="#f0f0f0"/>
    <polygon points="20.3,16.3 37.5,22.8 31.9,37 18.1,25.9" fill="#ffffff"/>
    <polygon points="37.5,22.8 40.2,19.6 39.9,30.1 31.9,37" fill="#cdcdcd"/>
    <text x="34" y="14.6" font-family="Liberation Sans" font-weight="bold" font-size="4.6" fill="#d8e2f4" transform="rotate(-24 34 14.6)">ERASER</text>
  </g>
  <!-- cell 2 blue eraser pen -->
  <g transform="translate(60.2,0)" clip-path="url(#c58)"><rect width="58" height="58" fill="#cfcfcf"/>
    <path d="M19.6 38 C17.5 46 22 51.5 30 50.6 C37 49.6 42 44 45.6 39.4" fill="none" stroke="url(#chk)" stroke-width="4.6" stroke-linecap="round"/>
    <polygon points="27.2,25.2 47.1,0 58,0 58,9.6 35.6,33.4" fill="#2c5cc0"/>
    <polygon points="29.5,22.4 47.1,0 52,0 32.2,25.2" fill="#4f86e6"/>
    <polygon points="33.6,31.2 58,5.4 58,9.6 35.6,33.4" fill="#1c3f94"/>
    <polygon points="21.8,29.8 27.2,25.6 35,32.6 29.2,36" fill="#ececec"/>
    <polygon points="21.8,29.8 29.2,36 28.4,37 21.2,31" fill="#b4b4b4"/>
  </g>
  <!-- cell 3 kneaded eraser -->
  <g transform="translate(120.2,0)" clip-path="url(#c58)"><rect width="58" height="58" fill="#cfcfcf"/>
    <g mask="url(#m3)"><ellipse cx="24" cy="45.5" rx="20" ry="7.6" fill="url(#chk)" transform="rotate(10 24 45.5)"/></g>
    <path d="M34.4 0 L58 0 L58 25 C52 30 46 33.6 40 35.4 C33 37.6 25 36 23.8 30 C23.2 24 25 18 26.6 13 C28 8 31 3 34.4 0Z" fill="#777"/>
    <path d="M40 0 L58 0 L58 14 C52 12 46 14 42 18 C38 14 38 6 40 0Z" fill="#6a6a6a" opacity=".8"/>
    <path d="M27 30 C29 20 32 10 37 2" stroke="#8e8e8e" stroke-width="2.6" fill="none" opacity=".7"/>
  </g>
  <!-- row 2 -->
  <g transform="translate(0,60)" clip-path="url(#c24)"><rect width="58" height="25" fill="#cfcfcf"/>
    <path d="M28 13 q2 -3 5 -1 l3 6 l-4 6 h-3 q-3 -6 -1 -11z" fill="#b8b8b8" opacity=".8"/>
    <polygon points="58,-1 41,11.6 47,22 58,13.6" fill="url(#silver)"/>
    <polygon points="41,11.6 35.5,15.6 41.6,26 47,22" fill="#151515"/>
    <polygon points="35.5,15.6 26,25 34,25 41.6,26" fill="#f4f4f4"/>
    <polygon points="38,13.8 36.4,15 42.4,25.4 44,24.2" fill="#e8e8e8"/>
  </g>
  <g transform="translate(60.2,60)" clip-path="url(#c24)"><rect width="58" height="25" fill="#cfcfcf"/>
    <polygon points="45.7,3.3 52.6,-0.5 58,-0.5 58,8.7 36.3,24.6 28.6,24.6 29,21.4" fill="#242424"/>
    <polygon points="46,3.6 52.6,0 55,0 31,21" fill="#4a4a4a" opacity=".7"/>
    <polygon points="45.6,5.6 53.4,0.6 55.2,3.2 47.4,8.4" fill="#6e6e6e"/>
  </g>
  <g transform="translate(120.2,60)" clip-path="url(#c24)"><rect width="58" height="25" fill="#cfcfcf"/>
    <polygon points="44.4,4.2 51.7,-0.5 58,-0.5 58,7.8 36.3,24.6 27.8,24.6 28.1,20.5" fill="#202020"/>
    <polygon points="44.6,4.6 51.7,0 54,0 30,20.4" fill="#484848" opacity=".7"/>
    <polygon points="45,6 52,1.2 53.6,3.6 46.6,8.6" fill="#666"/>
  </g>
</svg>

<!-- search row -->
<div class="abs" style="left:793.5px;top:565px;width:158.5px;height:21.5px;background:#3a3a3a;border-radius:3px;border:1px solid #3c3c3c"></div>
<span class="txt" style="left:796.6px;top:570.4px;font-size:12.4px;letter-spacing:-.2px;color:#7d7d7d">Search</span>
<div class="abs" style="left:958px;top:568.4px;width:14px;height:13.5px;background:#3a3a3a"></div>
<svg class="abs" style="left:958px;top:568px" width="14" height="14" viewBox="0 0 14 14"><path d="M3.2 7.6 L5.8 11.2 L10.8 2.6" stroke="#d4d4d4" stroke-width="1.5" fill="none"/></svg>
<span class="txt rt" style="left:977.5px;top:570.3px;letter-spacing:-.02px;color:#d2d2d2">Filter in Tag</span>

<!--STATUS-->
<!-- vertical scrollbar -->
<div class="abs" style="left:772.5px;top:-2px;width:13.3px;height:273.5px;background:#444;border:1px solid #4e4e4e"></div>
<div class="abs" style="left:773px;top:561px;width:12.5px;height:13px;background:#454545;border:1px solid #4f4f4f"></div>
<div class="abs" style="left:774.7px;top:565.2px;width:0;height:0;border-left:4.4px solid transparent;border-right:4.4px solid transparent;border-top:4.8px solid #b0b0b0"></div>
<div class="abs" style="left:772.5px;top:574px;width:13px;height:14px;background:#474747;border:1px solid #4e4e4e"></div>
<!-- horizontal scrollbar -->
<div class="abs" style="left:10px;top:575px;width:436px;height:12.5px;background:#444;border:1px solid #4d4d4d"></div>
<div class="abs" style="left:758.5px;top:574.5px;width:13px;height:13.5px;background:#454545;border:1px solid #4f4f4f"></div>
<div class="abs" style="left:762.6px;top:577px;width:0;height:0;border-top:4.2px solid transparent;border-bottom:4.2px solid transparent;border-left:5px solid #aaa"></div>
<!-- status bar -->
<span class="txt" style="left:-10.4px;top:597.9px;font-size:13.3px;letter-spacing:.36px;color:#d0d0d0">elle-V2-srgbtrc.icc</span>
<div class="abs" style="left:561px;top:592px;width:134px;height:24px;border:1px solid #525252;border-radius:2px;background:#474747"></div>
<span class="txt" style="left:565.4px;top:597.4px;font-size:13.2px;letter-spacing:-.05px;color:#d0d0d0">800 <span style="text-decoration:underline">x</span> 1,100 (7.3 MiB)</span>
<svg class="abs" style="left:702px;top:592px" width="26" height="24" viewBox="-13 -12 26 24"><circle r="10.6" fill="#2f2f2f" stroke="#555" stroke-width="1"/><path d="M-9.6 0 H9.6 M0 -9.6 V9.6" stroke="#505050" stroke-width="1" stroke-dasharray="1.4 1.4"/><path d="M0 0 H10.6" stroke="#efefef" stroke-width="2.2" stroke-linecap="round"/></svg>
<span class="txt" style="left:736.6px;top:597.4px;font-size:13.2px;color:#d0d0d0">0.00<span style="position:relative;top:-2.2px;font-size:12px">°</span></span>
<span class="txt" style="left:880.6px;top:597.4px;font-size:13.2px;letter-spacing:-.2px;color:#d0d0d0">166.7%</span>
<div class="abs" style="left:943px;top:601px;width:80.5px;height:4.5px;border-radius:2px;background:#363636"></div>
<div class="abs" style="left:943px;top:601px;width:30px;height:4.5px;border-radius:2px;background:#5b8fbc;border:1px solid #3d3d3d"></div>
<div class="abs" style="left:970px;top:597.6px;width:11.5px;height:11.5px;border-radius:2.5px;background:linear-gradient(#505050,#464646);border:1px solid #383838;box-shadow:inset 0 0 0 1px #565656"></div>
<svg class="abs" style="left:1028px;top:597px" width="19" height="15" viewBox="0 0 19 15"><rect x="1.8" y="1.8" width="14.6" height="8.4" fill="none" stroke="#dcdcdc" stroke-width="1.3"/><circle cx="9.1" cy="6" r="1.1" fill="#dcdcdc"/><path d="M9.1 10.2 V13 M4.4 13.2 H13.8" stroke="#dcdcdc" stroke-width="1.3"/></svg>

</body>
</html>
